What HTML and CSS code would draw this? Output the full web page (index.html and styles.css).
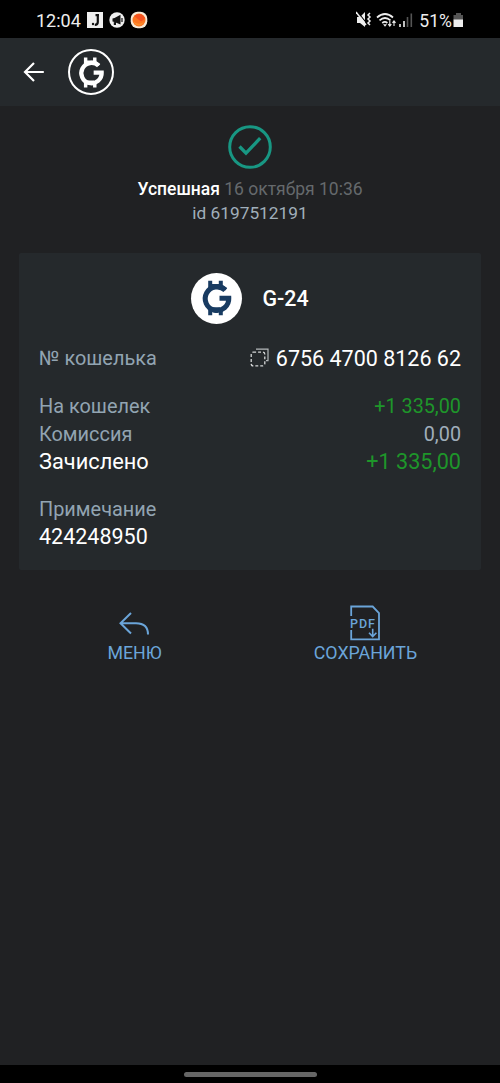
FILE: index.html
```html
<!DOCTYPE html>
<html lang="ru">
<head>
<meta charset="utf-8">
<title>G-24</title>
<link rel="stylesheet" href="styles.css">
</head>
<body>
<svg class="defs" width="0" height="0">
  <symbol id="g-coin" viewBox="-18 -18 36 36">
    <path d="M8.2 -7.8A11.8 11.8 0 1 0 11.8 .2H2.5" fill="none" stroke="currentColor" stroke-width="5"/>
    <path d="M-8.8 -17.3h4v3.3h6.6v-3.3h4v4.3l4.4 3-2 2.5-5-2.5h-12zM-8.8 17.3h4v-3.3h6.6v3.3h4v-6l-3-2h-8.6l-3 2z" fill="currentColor"/>
  </symbol>
</svg>
<div class="screen">
  <div class="status">
    <span class="clock">12:04</span>
    <svg class="notices" width="62" height="20" viewBox="0 0 62 20">
      <path fill="#eee" d="M0 2h16v16H0z"/>
      <path d="M8.5 5.2H12M10.8 5v7q0 2.8-3 2.8" fill="none" stroke="#111" stroke-width="2.2"/><circle cx="6" cy="14" r="1.2" fill="#111"/>
      <circle cx="30" cy="10" r="7.7" fill="#eee"/>
      <path d="M25.5 8.5l2-.5 6-3.2v9.7L27.5 12l-2-.5zM26.8 12v3h2.2v-2.5" fill="#111"/>
      <path d="M35 8v4" stroke="#111" stroke-width="1.2"/>
      <rect x="43.7" y="1.7" width="16.6" height="16.6" rx="7" fill="#f7ead8"/>
      <circle cx="52" cy="10" r="6.5" fill="#fb7420"/><path d="M47 6q7-5 11 2-3 5-6 2z" fill="#f4511e"/><path d="M46 11q5 5 11 1-4 6-9 2z" fill="#fd8f2b"/>
    </svg>
    <svg class="signals" width="58" height="20" viewBox="0 0 58 20">
      <path d="M1 7h3l5-5v15l-5-4H1z" fill="#eee"/>
      <path d="M1 1l11 14" stroke="#000" stroke-width="1.2"/><path d="M0 2l10 13" stroke="#eee" stroke-width="1.5"/>
      <path d="M14 3l-2 2 2 2-2 2 2 2-2 2 2 2" fill="none" stroke="#eee" stroke-width="1.5"/>
      <path d="M21 7.5q8-7 16 0M23.5 10.4q5.5-4.8 11 0M26.2 13q2.8-2.2 5.2 0" fill="none" stroke="#eee" stroke-width="1.7"/>
      <path d="M27 14.2h4l-2 2.6z" fill="#eee"/>
      <path d="M33.8 11v5M32.3 14.2l1.5 2 1.5-2M38 16v-5M36.5 12.8l1.5-2 1.5 2" fill="none" stroke="#eee" stroke-width="1.1"/>
      <path d="M44 14v3M48 11v6" stroke="#eee" stroke-width="1.6"/><path d="M51.5 7v10M55.3 3.5V17" stroke="#555" stroke-width="1.6"/>
    </svg>
    <span class="percent">51%</span>
    <svg class="battery" width="11" height="18" viewBox="0 0 11 18"><path d="M3 2h5v2h2v5H.5V4H3z" fill="#555"/><path d="M.5 8.5H10V16H.5z" fill="#eee"/></svg>
  </div>
  <header class="header">
    <svg class="back" width="22" height="22" viewBox="0 0 22 22"><path d="M20.8 11H2.5M11 2L2 11l9 9" fill="none" stroke="#fff" stroke-width="2.2"/></svg>
    <div class="brand"><svg class="brand-mark"><use href="#g-coin"/></svg></div>
  </header>
  <main class="content">
    <section class="result">
      <svg width="44" height="44" viewBox="0 0 44 44"><circle cx="22" cy="22" r="20.3" fill="none" stroke="#189783" stroke-width="3"/><path d="M11.5 21.5l6.5 6.7 14.2-15" fill="none" stroke="#189783" stroke-width="3.3"/></svg>
      <p class="state"><b>Успешная</b> <span>16 октября 10:36</span></p>
      <p class="ident">id 6197512191</p>
    </section>
    <section class="card">
      <div class="payee"><div class="coin"><svg class="coin-mark"><use href="#g-coin"/></svg></div><span>G-24</span></div>
      <div class="row"><span class="label wallet-label">№ кошелька</span>
        <span class="wallet"><svg width="20" height="20" viewBox="0 0 20 20"><path d="M6 1.2h12v11.5h-2" fill="none" stroke="#b5b9bb" stroke-width="1.2"/><rect x="1.2" y="4.2" width="13.6" height="13.6" rx="2" fill="none" stroke="#d5d7d8" stroke-width="1.3" stroke-dasharray="2.9 2"/></svg><span class="big">6756 4700 8126 62</span></span></div>
      <div class="sums">
        <div class="row"><span class="label to-label">На кошелек</span><span class="plus">+1 335,00</span></div>
        <div class="row"><span class="label fee-label">Комиссия</span><span class="fee">0,00</span></div>
        <div class="row"><span class="credited">Зачислено</span><span class="plus total">+1 335,00</span></div>
      </div>
      <div class="note"><div class="row"><span class="label note-label">Примечание</span></div><div class="row"><span class="big">424248950</span></div></div>
    </section>
    <nav class="actions">
      <div class="action"><svg width="32" height="36" viewBox="0 0 32 36"><path d="M12 8L1.5 18.2 12 28.5M1.5 18.2H17Q29 18.2 29 29.5" fill="none" stroke="#6ba5d9" stroke-width="2"/></svg><span class="menu">МЕНЮ</span></div>
      <div class="action"><svg width="32" height="36" viewBox="0 0 32 36"><path d="M1.2 11V1.5h21.5l6.3 6.5V34.3H1.2V25" fill="none" stroke="#6ba5d9" stroke-width="1.8"/><text x="0" y="23" class="pdf" textLength="25">PDF</text><path d="M22.7 23.8v7.3M19 27.8l3.7 3.7 3.7-3.7" fill="none" stroke="#6ba5d9" stroke-width="1.6"/></svg><span class="save">СОХРАНИТЬ</span></div>
    </nav>
  </main>
  <footer class="gesture"><div class="handle"></div></footer>
</div>
</body>
</html>
```
FILE: styles.css
```css
* { box-sizing: border-box; }
body { margin: 0; background: #202123; font-family: Roboto, "Noto Sans", sans-serif; color: #fff; }
p { margin: 0; }
svg { display: block; flex: none; }
.defs { display: none; }
.screen { width: 500px; height: 1083px; display: flex; flex-direction: column; }
.status { height: 38px; background: #000; display: flex; align-items: center; padding: 2px 36px 0 36px; color: #eee; white-space: nowrap; }
.clock { font-size: 18px; width: 51px; }
.signals { margin-left: auto; }
.percent { font-size: 17.6px; margin-left: 5px; padding-top: 1px; }
.battery { margin-left: 1px; }
.header { height: 68px; background: #25292c; display: flex; align-items: center; padding-left: 23px; }
.brand { width: 46px; height: 46px; margin-left: 23px; border: 2.5px solid #fff; border-radius: 50%; display: grid; place-items: center; }
.brand-mark { width: 31px; height: 31px; }
.content { flex: 1; padding: 19px 19px 0; }
.result { display: flex; flex-direction: column; align-items: center; height: 128px; }
.state { margin-top: 8px; font-size: 17.5px; line-height: 25px; color: #65696c; white-space: nowrap; }
.state b { color: #fff; font-weight: 500; }
.ident { font-size: 17.3px; line-height: 23px; color: #a0afbb; }
.card { height: 317px; padding: 19px 20px; background: #25292c; border-radius: 2px; }
.payee { height: 52px; display: flex; justify-content: center; align-items: center; gap: 20px; font-size: 21.4px; font-weight: 500; margin-bottom: 21px; }
.coin { width: 51px; height: 51px; background: #fff; border-radius: 50%; color: #183b61; display: grid; place-items: center; }
.coin-mark { width: 36px; height: 36px; }
.row { height: 27.5px; line-height: 28px; display: flex; justify-content: space-between; align-items: center; white-space: nowrap; }
.label { color: #92a4b2; font-size: 19.9px; }
.wallet { display: flex; align-items: center; gap: 6px; }
.wallet svg { margin-bottom: 2px; }
.big { font-size: 21.5px; }
.credited { font-size: 21.8px; }
.sums { margin-top: 21px; }
.note { margin-top: 20px; }
.plus { color: #1e962a; font-size: 19.8px; }
.plus.total { font-size: 21.6px; }
.fee { color: #a0aebb; font-size: 19.8px; }
.actions { display: grid; grid-template-columns: 1fr 1fr; padding-top: 35px; }
.action { display: flex; flex-direction: column; align-items: center; color: #6ba5d9; font-size: 17.8px; line-height: 24px; }
.pdf { fill: #6ba5d9; font-size: 12.5px; font-weight: 500; }
.gesture { height: 18px; background: #000; display: flex; justify-content: center; padding-top: 7px; }
.handle { width: 133px; height: 5px; border-radius: 3px; background: #666; }
```
